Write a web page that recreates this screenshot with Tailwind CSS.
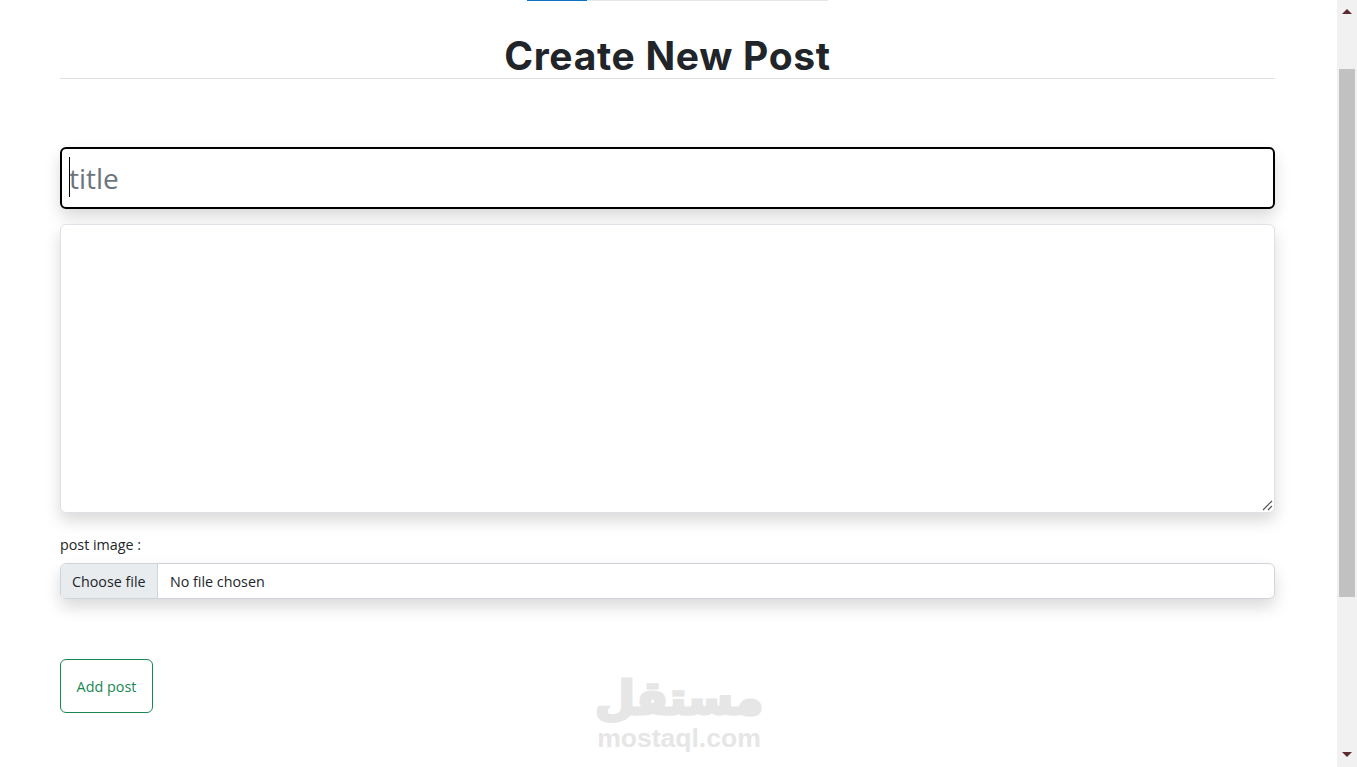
<!DOCTYPE html>
<html lang="en">

<head>
  <meta charset="UTF-8">
  <meta name="viewport" content="width=device-width, initial-scale=1.0">
  <title>Create New Post</title>
  <script src="https://cdn.jsdelivr.net/npm/@tailwindcss/browser@4"></script>
</head>

<body class="h-screen overflow-hidden bg-white font-['Open_Sans',sans-serif] text-[#212529]">
  <div class="flex h-full">
    <main class="relative flex-1 min-w-0 px-[60px] pr-[62px]">
      <!-- progress -->
      <div class="mx-auto flex h-px w-[301px] translate-x-[10px] bg-[#e5e7e9]">
        <div class="h-full w-[60px] bg-[#0d72c4]"></div>
      </div>

      <h1 class="mt-[33px] text-center font-['Inter',sans-serif] text-[39px] leading-[44px] font-bold tracking-[0.7px]">Create New Post</h1>
      <hr class="border-[#dee2e6]">

      <form class="mt-[68px]">
        <div class="relative">
          <input type="text" placeholder="title" class="block h-[62px] w-full rounded-md border-2 border-black bg-white px-[7px] text-[28px] shadow-[0_8px_16px_rgba(0,0,0,0.15)] outline-none placeholder:text-[#6c757d]">
          <span class="absolute top-[10px] left-[9px] h-[40px] w-px bg-black"></span>
        </div>

        <div class="relative mt-[15px]">
          <textarea class="block h-[289px] w-full resize-none rounded-md border border-[#dee2e6] bg-white shadow-[0_8px_16px_rgba(0,0,0,0.15)] outline-none"></textarea>
          <!-- resize handle -->
          <svg class="absolute right-[2px] bottom-[2px]" width="11" height="11" viewBox="0 0 11 11" fill="none" stroke="#555" stroke-width="1.2">
            <path d="M1 10 L10 1"/>
            <path d="M6 10 L10 6"/>
          </svg>
        </div>

        <label for="image" class="mt-[22px] block text-[14.3px] leading-[20px]">post image :</label>
        <label for="image" class="mt-[8px] flex h-[36px] w-full items-center overflow-hidden rounded-md border border-[#ced4da] text-[14.3px] shadow-[0_8px_16px_rgba(0,0,0,0.15)]">
          <span class="flex h-full w-[97px] items-center border-r border-[#ced4da] bg-[#e9ecef] pt-px pl-[11px]">Choose file</span>
          <span class="pt-px pl-[12px]">No file chosen</span>
        </label>
        <input id="image" type="file" class="hidden">

        <button type="button" class="mt-[60px] block h-[54px] w-[93px] rounded-md border border-[#198754] bg-white pt-[2px] text-[14.4px] text-[#198754]">Add post</button>
      </form>

      <!-- watermark -->
      <div class="pointer-events-none absolute top-[667px] left-[596px] flex w-[166px] flex-col items-center text-[#e6e6e6]">
        <span class="font-['DejaVu_Sans',sans-serif] text-[46px] leading-[62px] font-bold [-webkit-text-stroke:3px_#e6e6e6]">مستقل</span>
        <span class="-mt-[3px] font-['Liberation_Sans',sans-serif] text-[26.5px] leading-[24px] font-bold">mostaql.com</span>
      </div>
    </main>

    <!-- scrollbar -->
    <aside class="flex w-[20px] shrink-0 flex-col items-center justify-between bg-[#f1f1f1] py-[9px]">
      <svg width="10" height="6" viewBox="0 0 10 6"><polygon points="5,0 10,5 0,5" fill="#5c2b33"/></svg>
      <div class="absolute top-[69px] h-[528px] w-[16px] bg-[#c1c1c1]"></div>
      <svg width="10" height="6" viewBox="0 0 10 6"><polygon points="0,0 10,0 5,5" fill="#5c2b33"/></svg>
    </aside>
  </div>
</body>

</html>
